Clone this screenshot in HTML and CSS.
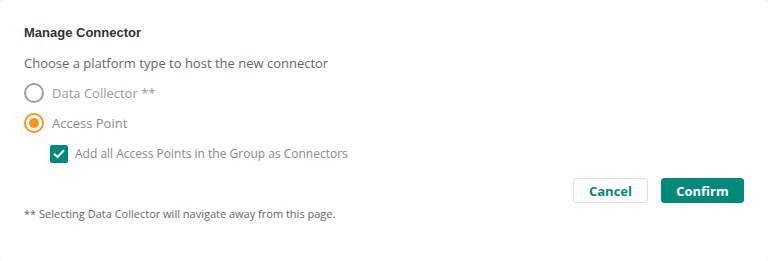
FILE: index.html
```html
<!DOCTYPE html>
<html>
<head>
<meta charset="utf-8">
<link rel="stylesheet" href="styles.css">
</head>
<body>
<div class="card">
  <h1 class="title">Manage Connector</h1>
  <p class="subtitle">Choose a platform type to host the new connector</p>
  <div class="options">
    <label class="radio">
      <span class="radio-circle"></span>
      <span class="radio-label muted">Data Collector **</span>
    </label>
    <label class="radio">
      <span class="radio-circle checked"><span class="radio-dot"></span></span>
      <span class="radio-label">Access Point</span>
    </label>
  </div>
  <label class="check">
    <span class="check-box">
      <svg width="12" height="10" viewBox="0 0 12 10"><path d="M1.5 5.2 L4.5 8 L10.5 1.8" fill="none" stroke="#fff" stroke-width="2" stroke-linecap="round" stroke-linejoin="round"/></svg>
    </span>
    <span class="check-label">Add all Access Points in the Group as Connectors</span>
  </label>
  <div class="actions">
    <button class="btn btn-cancel">Cancel</button>
    <button class="btn btn-confirm">Confirm</button>
  </div>
  <p class="note">** Selecting Data Collector will navigate away from this page.</p>
</div>
</body>
</html>
```

FILE: styles.css
```css
html, body {
  margin: 0;
  padding: 0;
  background: #f4f4f4;
}
.card {
  box-sizing: border-box;
  width: 768px;
  height: 261px;
  background: #fff;
  border-radius: 6px;
  padding: 23px 24px 0 24px;
  display: flex;
  flex-direction: column;
  font-family: "Open Sans", sans-serif;
}
.title {
  margin: 0;
  font-family: "Liberation Sans", Arial, sans-serif;
  font-weight: bold;
  font-size: 13px;
  line-height: 20px;
  color: #333;
}
.subtitle {
  margin: 10px 0 0 0;
  font-size: 13px;
  line-height: 20px;
  color: #666;
}
.options {
  margin-top: 10px;
  display: flex;
  flex-direction: column;
  gap: 10px;
}
.radio {
  display: flex;
  align-items: center;
  height: 20px;
}
.radio-circle {
  box-sizing: border-box;
  width: 20px;
  height: 20px;
  border-radius: 50%;
  border: 2px solid #9e9e9e;
  display: flex;
  align-items: center;
  justify-content: center;
}
.radio-circle.checked {
  border-color: #f7941d;
}
.radio-dot {
  width: 10px;
  height: 10px;
  border-radius: 50%;
  background: #f7941d;
}
.radio-label {
  margin-left: 8px;
  font-size: 13px;
  line-height: 20px;
  color: #888;
}
.radio-label.muted {
  color: #999;
}
.check {
  margin-top: 12px;
  margin-left: 26px;
  display: flex;
  align-items: center;
  height: 18px;
}
.check-box {
  width: 18px;
  height: 18px;
  border-radius: 2px;
  background: #00897b;
  display: flex;
  align-items: center;
  justify-content: center;
}
.check-label {
  margin-left: 7px;
  font-size: 12px;
  line-height: 18px;
  color: #888;
}
.actions {
  margin-top: 15px;
  display: flex;
  justify-content: flex-end;
  gap: 13px;
}
.btn {
  box-sizing: border-box;
  height: 25px;
  border-radius: 3px;
  font-family: "Open Sans", sans-serif;
  font-weight: bold;
  font-size: 13px;
  padding: 0;
  cursor: pointer;
}
.btn-cancel {
  width: 75px;
  background: #fff;
  border: 1px solid #e0e0e0;
  color: #00897b;
}
.btn-confirm {
  width: 83px;
  background: #00897b;
  border: 1px solid #00897b;
  color: #fff;
}
.note {
  margin: 3px 0 0 0;
  font-size: 11px;
  line-height: 16px;
  color: #666;
}
```
